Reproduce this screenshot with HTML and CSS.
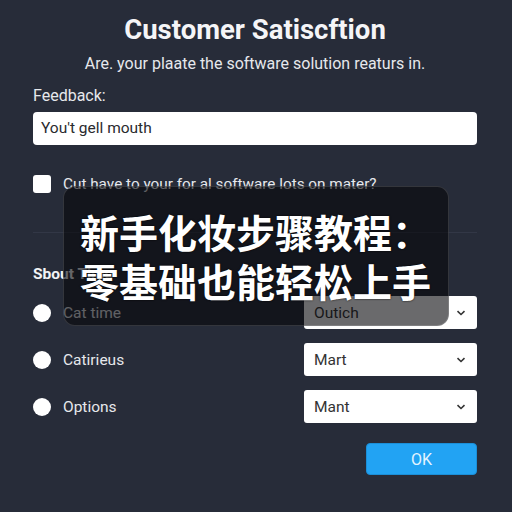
FILE: index.html
```html
<!DOCTYPE html>
<html lang="en">
<head>
  <meta charset="UTF-8">
  <meta name="viewport" content="width=device-width, initial-scale=1.0">
  <title>Customer Satisfaction</title>
  <link rel="stylesheet" href="styles.css">
</head>
<body>
  <div class="page">
    <h1>Customer Satiscftion</h1>
    <p class="subtitle">Are. your plaate the software solution reaturs in.</p>

    <!-- Feedback -->
    <label class="field-label" for="feedback">Feedback:</label>
    <div class="text-input" id="feedback">You't gell mouth</div>

    <div class="check-row">
      <span class="checkbox"></span>
      <span>Cut have to your for al software lots on mater?</span>
    </div>

    <div class="divider"></div>

    <!-- Options -->
    <h2>Sbout Time</h2>

    <div class="option-row">
      <div class="radio-label"><span class="radio"></span>Cat time</div>
      <div class="select">Outich
        <svg width="10" height="6" viewBox="0 0 10 6"><path d="M1.5 1.2 5 4.5 8.5 1.2" fill="none" stroke="#333" stroke-width="1.6"/></svg>
      </div>
    </div>
    <div class="option-row">
      <div class="radio-label"><span class="radio"></span>Catirieus</div>
      <div class="select">Mart
        <svg width="10" height="6" viewBox="0 0 10 6"><path d="M1.5 1.2 5 4.5 8.5 1.2" fill="none" stroke="#333" stroke-width="1.6"/></svg>
      </div>
    </div>
    <div class="option-row">
      <div class="radio-label"><span class="radio"></span>Options</div>
      <div class="select">Mant
        <svg width="10" height="6" viewBox="0 0 10 6"><path d="M1.5 1.2 5 4.5 8.5 1.2" fill="none" stroke="#333" stroke-width="1.6"/></svg>
      </div>
    </div>

    <div class="actions">
      <button type="button" class="ok-btn">OK</button>
    </div>

    <!-- caption overlay -->
    <div class="caption">
      <div>新手化妆步骤教程：</div>
      <div>零基础也能轻松上手</div>
    </div>
  </div>
</body>
</html>
```

FILE: styles.css
```css
body {
  margin: 0;
  background-color: #272c39;
  font-family: Roboto, "Liberation Sans", sans-serif;
  color: #e6e8ec;
}
.page {
  position: relative;
  width: 512px;
  height: 512px;
  box-sizing: border-box;
  padding: 14px 35px 0 33px;
}
h1 {
  margin: 0;
  font-size: 27.5px;
  line-height: 32px;
  font-weight: 700;
  text-align: center;
  color: #f5f5f7;
}
.subtitle {
  margin: 8px 0 0;
  font-size: 16px;
  line-height: 20px;
  text-align: center;
}
.field-label {
  display: block;
  margin-top: 12px;
  font-size: 16px;
  line-height: 20px;
}
.text-input {
  margin-top: 6px;
  height: 33px;
  box-sizing: border-box;
  padding: 0 8px;
  background: #fff;
  border-radius: 4px;
  color: #2a2a2e;
  font-size: 15.5px;
  line-height: 33px;
}
.check-row {
  display: flex;
  align-items: center;
  gap: 12px;
  margin-top: 29px;
  height: 20px;
  font-size: 15.3px;
}
.checkbox {
  width: 18px;
  height: 18px;
  border-radius: 3px;
  background: #fff;
}
.divider {
  margin-top: 38px;
  height: 1px;
  background: #323746;
}
h2 {
  margin: 31px 0 0;
  font-size: 15.5px;
  line-height: 20px;
  font-weight: 700;
  color: #f2f3f5;
}
.option-row {
  display: flex;
  justify-content: space-between;
  align-items: center;
  margin-top: 14px;
  height: 33px;
}
h2 + .option-row {
  margin-top: 12px;
}
.radio-label {
  display: flex;
  align-items: center;
  gap: 12px;
  font-size: 15.5px;
}
.radio {
  width: 18px;
  height: 18px;
  border-radius: 50%;
  background: #fff;
}
.select {
  display: flex;
  justify-content: space-between;
  align-items: center;
  width: 173px;
  height: 33px;
  box-sizing: border-box;
  padding: 0 11px 0 10px;
  background: #fff;
  border-radius: 3px;
  color: #333;
  font-size: 15.5px;
}
.actions {
  display: flex;
  justify-content: flex-end;
  margin-top: 20px;
}
.ok-btn {
  width: 111px;
  height: 32px;
  border: 1px solid #1b8fd8;
  border-radius: 4px;
  background: #22a3f3;
  color: #e4f4ff;
  font-family: Roboto, "Liberation Sans", sans-serif;
  font-size: 16px;
}
.caption {
  position: absolute;
  left: 63px;
  top: 186px;
  width: 386px;
  height: 140px;
  box-sizing: border-box;
  padding: 20px 0 0 16px;
  border: 1px solid rgba(255, 255, 255, 0.14);
  border-radius: 12px;
  background: rgba(6, 7, 10, 0.6);
  color: #fff;
  font-family: "Noto Sans CJK SC", sans-serif;
  font-size: 39px;
  font-weight: 700;
  line-height: 49px;
  text-shadow: 0 0 2px #000;
}
```
